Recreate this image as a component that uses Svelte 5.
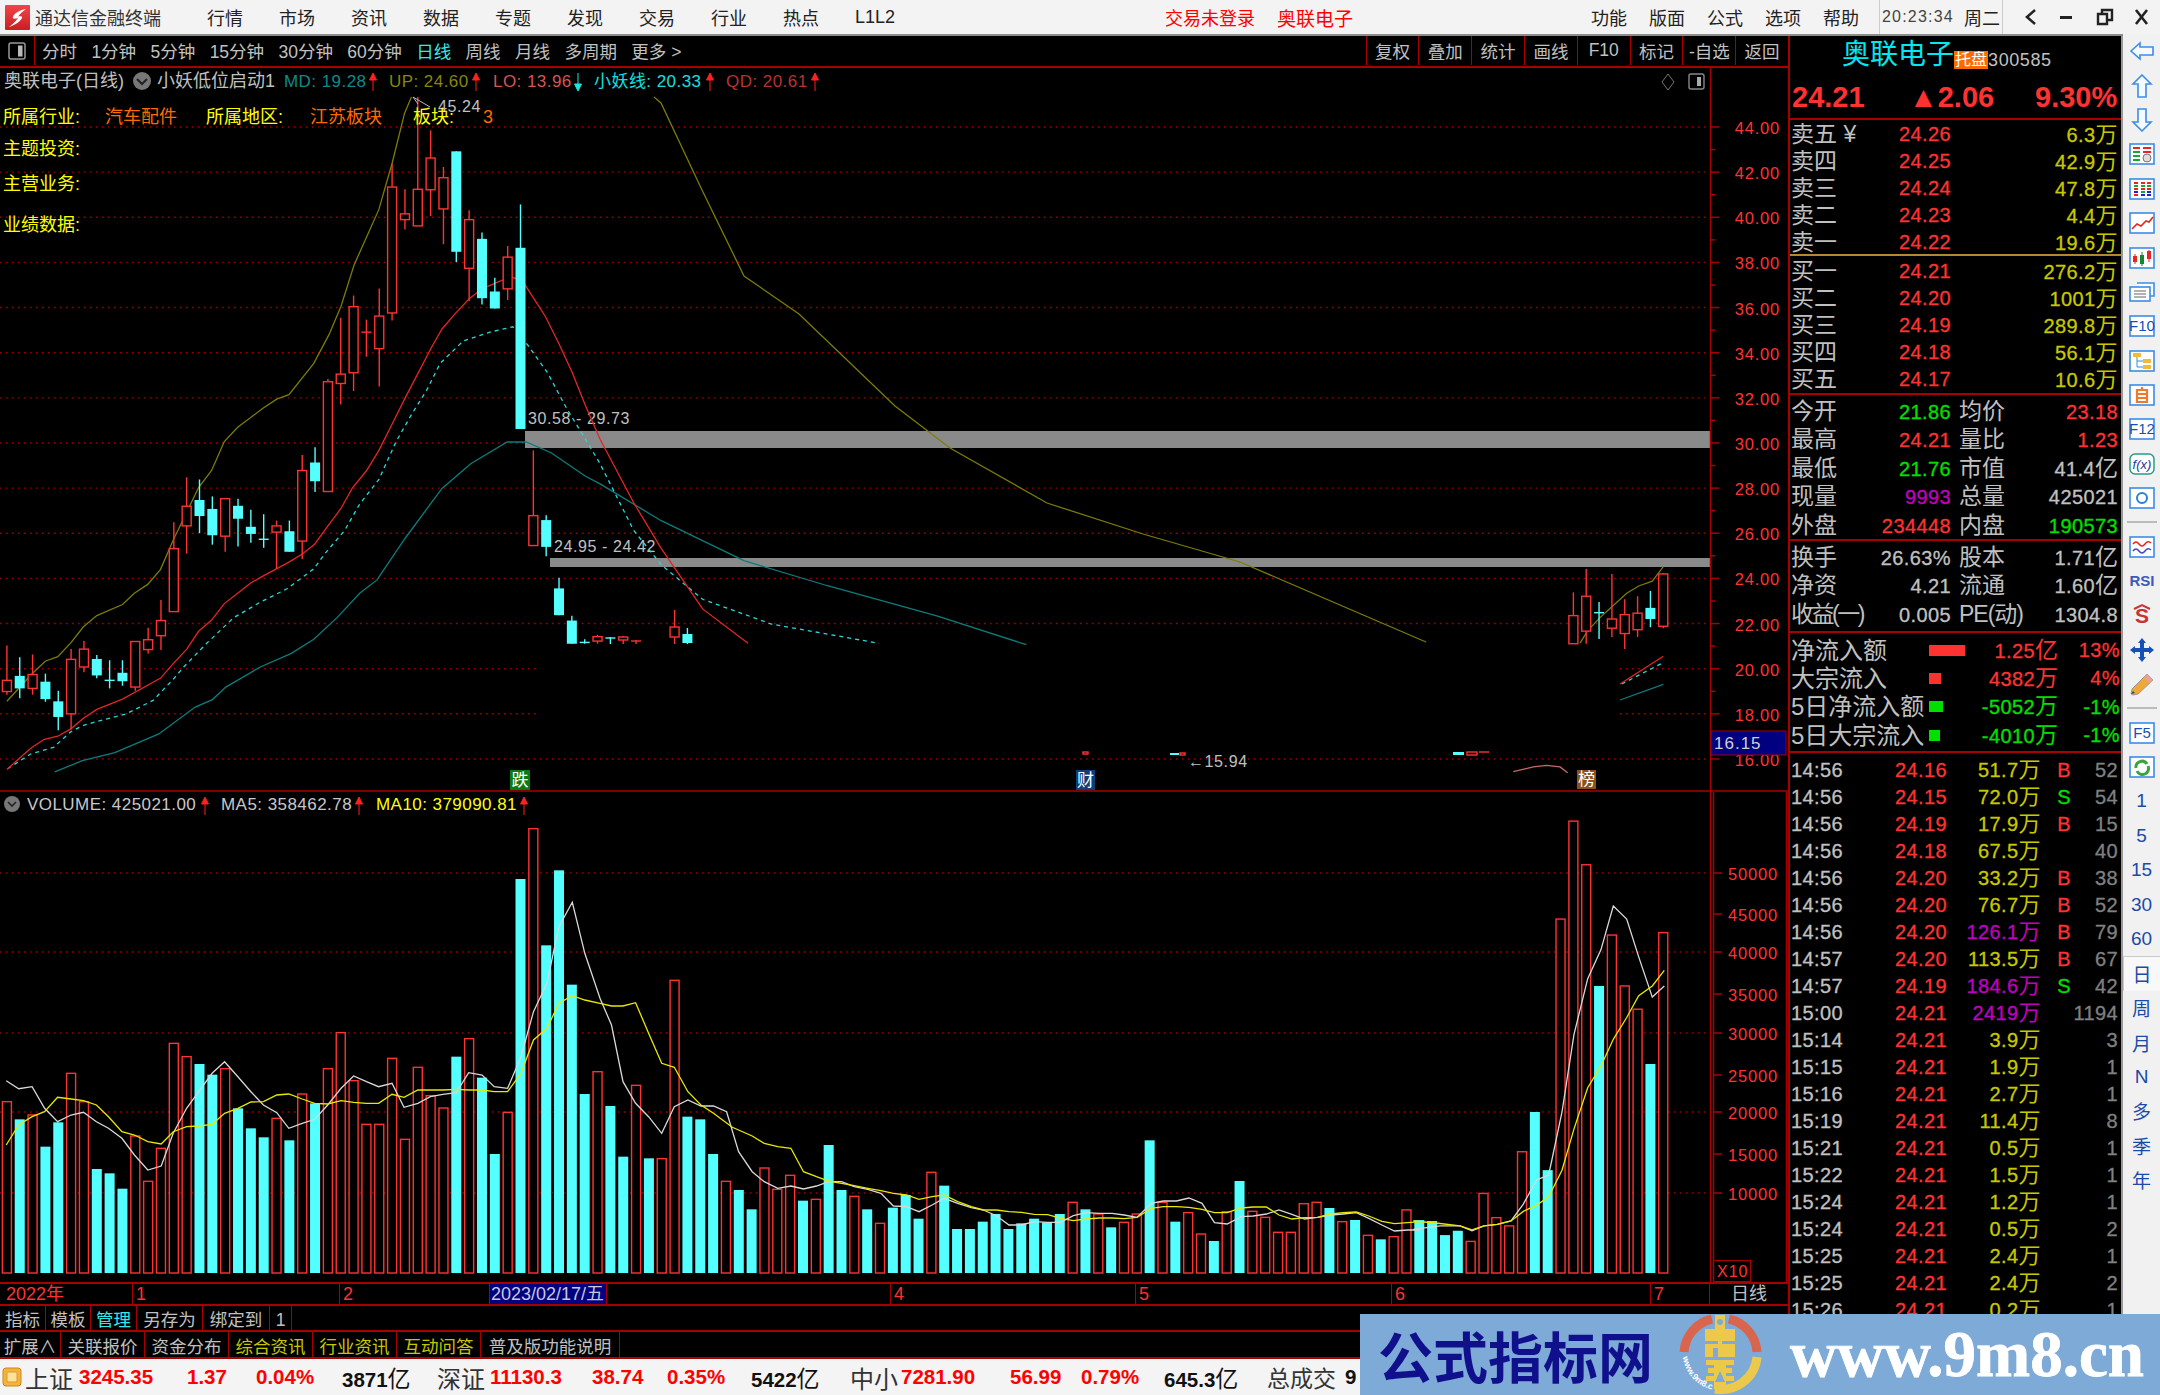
<script>
  const X = (i) => 6.9 + 12.84 * i;
  const y7 = (v) => 100 + v / 2.24;
  const y9 = (v) => 540 + v / 2.063;
  const y8 = (v) => 780 + v / 3;
  const z7 = ([x, y]) => [x / 2.613, y7(y)];
  const z8 = ([x, y]) => [x / 2.24, y8(y)];
  const z11 = ([x, y]) => [600 + x / 1.912, y8(y)];
  const z9 = ([x, y]) => [1400 + x / 3, y9(y)];
  const sh = ([x, y]) => [x * 1.3776, y * 1.3776];
  const pts = (a) => a.map((p) => p[0].toFixed(1) + ',' + p[1].toFixed(1)).join(' ');
  const pair = (a) => { const r = []; for (let i = 0; i < a.length; i += 2) r.push([a[i], a[i + 1]]); return r; };
  const num = (s) => s.replace(/[亿万]$/, '');
  const unit = (s) => (/[亿万]$/.test(s) ? s.slice(-1) : '');

  // r = rising (hollow red), c = falling (cyan): high, top, bottom, low
  const c7 = [
    ['r',1222,1300,1325,1332],['c',1248,1290,1318,1340],['r',1242,1287,1318,1332],['c',1285,1303,1342,1348],
    ['c',1323,1347,1382,1412],['r',1230,1253,1375,1410],['r',1212,1230,1270,1282],['c',1243,1252,1289,1295],
    ['c',1255,1300,1302,1318],['c',1255,1283,1302,1312],['r',1213,1213,1315,1323],['r',1182,1209,1231,1240],
    ['r',1120,1166,1200,1232],['r',946,1005,1146,1146],['r',845,910,954,1016],['c',850,896,932,970],
    ['c',888,916,975,996],['r',893,893,977,1012],['c',893,909,938,1000],['c',918,956,972,992],
    ['c',928,984,988,1003],['r',942,954,968,1050],['c',942,966,1012,1012],['r',795,830,988,1028],
    ['c',778,812,854,878],['r',625,631,877,877],['r',488,614,635,682],['r',438,463,611,652],
    ['r',492,520,522,575],['r',422,484,557,642],['r',142,195,477,494],['r',200,255,268,290],
    ['r',-7,200,282,282],['r',68,130,201,260],['r',150,174,244,323],['c',115,115,340,363],
    ['r',247,268,377,450],['c',297,311,444,458],['c',398,429,467,467],['r',327,352,423,448],
    ['c',234,331,737,737],['r',785,931,998,998],['c',930,941,1001,1022],['c',1070,1094,1154,1154],
    ['c',1155,1166,1218,1218],['c',1208,1215,1218,1218],['r',1198,1202,1212,1218],
  ].map((d, i) => ({ k: d[0], x: X(i), hi: y7(d[1]), top: y7(d[2]), bot: y7(d[3]), lo: y7(d[4]) }));
  const extra = [
    { k: 'c', x: X(47), hi: 637, top: 638, bot: 639, lo: 644 },
    { k: 'r', x: X(48), hi: 636, top: 637, bot: 640, lo: 644 },
    { k: 'r', x: X(49), hi: 640, top: 641, bot: 642, lo: 644 },
    { k: 'r', x: X(52), hi: 610, top: 627, bot: 637, lo: 644 },
    { k: 'c', x: X(53), hi: 628, top: 634, bot: 643, lo: 644 },
  ];
  const c9 = [
    ['r',108,156,214,214],['r',60,116,188,214],['c',128,150,153,204],['r',70,163,182,200],
    ['r',122,154,193,225],['r',116,151,185,200],['c',105,140,163,180],['r',68,70,178,182],
  ].map((d, i) => ({ k: d[0], x: X(122 + i), hi: y9(d[1]), top: y9(d[2]), bot: y9(d[3]), lo: y9(d[4]) }));
  const candles = [...c7, ...extra, ...c9];

  const olive = [
    pts(pair([18,1347,84,1285,118,1257,151,1247,186,1215,218,1180,253,1155,320,1130,351,1105,386,1085,419,1052,453,985,519,868,553,830,586,765,621,733,688,690,723,670,755,660,820,590,860,525,891,462,925,370,990,245,1025,140,1057,30,1075,-7]).map(z7)),
    pts(pair([654,97,661,103,702,190,744,276,799,314,895,406,950,448,1047,503,1143,534,1240,562,1426,642])),
    pts(pair([540,213,563,187,600,160,640,135,680,110,716,95,757,85,790,55]).map(z9)),
  ];
  const redLine = [
    pts([...pair([18,1500,50,1475,84,1450,116,1432,151,1425,186,1408,218,1385,253,1365,320,1342,420,1295,453,1262,488,1230,519,1190,553,1165,586,1128,621,1105,655,1082,688,1066,755,1035,790,1017,822,995,856,955,891,915,920,870,958,830,990,785,1025,725,1060,665,1127,555,1155,513,1190,478,1226,445,1260,423,1300,408,1335,396,1365,405,1395,445,1425,485,1460,545,1495,610,1530,685,1568,760]).map(z7), ...pair([460,365,480,398,510,442,543,467]).map(sh)]),
    pts(pair([660,297,790,240]).map(z9)),
  ];
  const dash = [
    pts([...pair([20,1498,80,1465,140,1450,185,1415,220,1400,285,1385,330,1375,400,1345,450,1300,480,1270,540,1217,610,1160,680,1125,750,1095,820,1050,850,1015,900,965,940,905,990,850,1035,765,1075,705,1115,650,1150,590,1210,540,1280,520,1340,508,1380,550,1430,610,1480,690,1530,760,1568,815]).map(z7), ...pair([460,385,480,410,510,435,560,453,638,467]).map(sh)]),
    pts(pair([665,297,790,253]).map(z9)),
  ];
  const teal = [
    pts([...pair([143,1505,215,1480,300,1462,415,1420,510,1360,555,1343,590,1315,680,1270,760,1240,820,1208,880,1160,940,1105,985,1075,1060,980,1155,870,1230,815,1325,766,1375,766,1440,790,1530,843,1568,860]).map(z7), ...pair([480,378,540,407,600,425,680,447,745,468]).map(sh)]),
    pts(pair([660,330,790,298]).map(z9)),
  ];
  const pink = pts(pair([340,478,400,468,440,465,480,468,503,480]).map(z9));

  const priceY = (p) => 127 + (44 - p) * 22.57;
  const priceGrid = [];
  for (let p = 44; p >= 16; p -= 2) priceGrid.push(p);
  const priceMinor = [];
  for (let p = 43; p >= 17; p -= 2) priceMinor.push(p);

  // top of each volume bar
  const v8 = 'r965 c1018 r1005 c1100 c1027 r880 r965 c1167 c1180 c1226 r1068 r1204 r1105 r790 r830 c852 c884 r866 c985 c1045 c1072 r1015 c1081 r942 c970 r866 r758 r902 r1033 r1033 r835 r1078 r862 r947 r984 c830 r776 c893 c1122 r997 c297 r146 c496 c271 c614 c942 r875'.split(' ').map((s) => ({ k: s[0], top: y8(+s.slice(1)) }));
  const v11 = 'c978 c1130 r916 c1135 r1136 r601 c1010 c1018 c1122 r1204 c1230 c1288 r1164 r1228 r1186 c1262 r1258 c1095 c1230 r1249 c1288 r1330 c1283 c1245 c1316 r1177 c1217 c1347 c1347 c1325 c1302 c1347 c1330 c1316 c1327 c1302 r1267 c1288 r1302 c1342 r1327 r1302 c1081 r1267 c1325 r1298 r1362 c1383 r1295 c1203 r1294 r1312 r1357 r1357 r1271 r1267 c1284 r1325 c1320 r1366 c1378 r1370'.split(' ').map((s) => ({ k: s[0], top: y8(+s.slice(1)) }));
  const v9 = 'r1382 c1403 c1405 c1434 c1425 r1447 r1348 r1398 r1415 r1262 c1180 c1300 r782 r580 r670 c920 r815 r920 r968 c1081 r810'.split(' ').map((s) => ({ k: s[0], top: y9(+s.slice(1)) }));
  const bars = [...v8, ...v11, ...v9].map((b, i) => ({ ...b, x: X(i) }));

  const ma5 = pts([
    ...pair([14,902,42,926,72,920,100,985,129,1025,159,1005,187,997,216,1025,243,1045,273,1075,301,1125,331,1170,361,1158,388,1060,418,985,445,935,475,880,503,845,533,890,562,935,590,975,620,998,647,1045,677,1030,705,1018,734,975,764,925,792,888,821,905,848,920,878,910,905,982,936,970,964,950,992,943,1022,938,1050,878,1080,885,1107,920,1137,925,1167,830,1195,695,1225,610,1252,440,1282,367,1310,520]).map(z8),
    ...pair([0,655,22,735,44,905,68,970,93,1010,118,1060,142,980,168,960,193,978,217,978,242,995,265,1115,291,1175,314,1205,340,1225,365,1218,389,1227,414,1218,437,1205,462,1205,486,1220,512,1228,537,1240,561,1278,586,1280,610,1295,635,1275,658,1255,684,1270,710,1283,733,1290,758,1307,782,1335,806,1335,830,1325,856,1327,881,1327,905,1307,930,1298,955,1300,979,1300,1002,1305,1027,1312,1054,1270,1077,1263,1102,1263,1126,1254,1151,1270,1175,1328,1199,1332,1226,1310,1249,1308,1274,1302,1298,1290,1323,1303,1347,1317,1372,1312,1397,1305,1421,1302,1446,1298,1470,1315,1495,1335,1519,1353,1544,1350,1568,1350]).map(z11),
    ...pair([40,1422,120,1415,180,1415,216,1425,252,1415,292,1412,333,1405,370,1370,410,1320,446,1310,486,1180,522,1020,563,905,603,845,640,755,680,782,716,860,757,943,793,920]).map(z9),
  ]);
  const ma10 = pts([
    ...pair([14,1095,42,1035,72,1010,100,995,129,952,159,957,187,962,216,975,243,1010,273,1055,301,1065,331,1085,361,1092,388,1055,418,1040,445,1038,475,1033,503,1000,533,985,562,966,590,965,620,945,647,942,677,957,705,970,734,972,764,962,792,967,821,970,848,970,878,943,905,952,936,930,964,930,992,930,1022,928,1050,930,1080,930,1107,935,1137,935,1167,880,1195,780,1225,745,1252,670,1282,647,1310,660]).map(z8),
    ...pair([0,670,22,678,44,678,68,668,93,760,118,850,142,862,168,935,193,975,217,1000,253,1042,291,1068,314,1090,340,1100,365,1105,389,1175,414,1190,437,1203,462,1210,486,1217,512,1225,537,1232,561,1240,586,1245,610,1258,635,1250,658,1245,684,1265,710,1280,733,1290,758,1290,782,1295,806,1297,830,1303,856,1304,881,1315,905,1322,930,1317,955,1314,979,1314,1002,1316,1027,1312,1054,1285,1077,1280,1102,1280,1126,1282,1151,1288,1175,1298,1199,1298,1226,1284,1249,1281,1274,1281,1298,1305,1323,1317,1347,1313,1372,1312,1397,1302,1421,1298,1446,1296,1470,1308,1495,1324,1519,1331,1544,1328,1568,1325]).map(z11),
    ...pair([40,1405,120,1410,180,1415,216,1423,252,1415,292,1412,333,1405,370,1385,410,1372,446,1355,486,1300,522,1215,563,1130,603,1085,640,1030,680,985,716,940,757,920,793,888]).map(z9),
  ]);

  const volGrid = [[50000, 873], [40000, 952], [30000, 1033], [20000, 1112], [10000, 1193]];
  const volTicks = [[50000, 873], [45000, 914], [40000, 952], [35000, 994], [30000, 1033], [25000, 1075], [20000, 1112], [15000, 1154], [10000, 1193]];

  const indicators = [
    { t: 'MD: 19.28', x: 284, a: 373, c: '#0a8c8c', up: true },
    { t: 'UP: 24.60', x: 389, a: 476, c: '#86860a', up: true },
    { t: 'LO: 13.96', x: 493, a: 578, c: '#d85454', up: false },
    { t: '小妖线: 20.33', x: 594, a: 710, c: '#10e0e0', up: true },
    { t: 'QD: 20.61', x: 726, a: 815, c: '#b83232', up: true },
  ];
  const volInfo = [
    { t: 'VOLUME: 425021.00', x: 27, a: 205, c: '#c8c8c8' },
    { t: 'MA5: 358462.78', x: 221, a: 359, c: '#c8c8c8' },
    { t: 'MA10: 379090.81', x: 376, a: 524, c: '#ffff00' },
  ];

  const menu = ['行情', '市场', '资讯', '数据', '专题', '发现', '交易', '行业', '热点', 'L1L2'];
  const sysMenu = ['功能', '版面', '公式', '选项', '帮助'];
  const periods = ['分时', '1分钟', '5分钟', '15分钟', '30分钟', '60分钟', '日线', '周线', '月线', '多周期', '更多 >'];
  const actions = ['复权', '叠加', '统计', '画线', 'F10', '标记', '-自选', '返回'];

  const asks = [['卖五 ¥', '24.26', '6.3'], ['卖四', '24.25', '42.9'], ['卖三', '24.24', '47.8'], ['卖二', '24.23', '4.4'], ['卖一', '24.22', '19.6']];
  const bids = [['买一', '24.21', '276.2'], ['买二', '24.20', '1001'], ['买三', '24.19', '289.8'], ['买四', '24.18', '56.1'], ['买五', '24.17', '10.6']];
  const stats = [
    ['今开', '21.86', 'g', '均价', '23.18', 'r'], ['最高', '24.21', 'r', '量比', '1.23', 'r'], ['最低', '21.76', 'g', '市值', '41.4亿', 'w'],
    ['现量', '9993', 'p', '总量', '425021', 'w'], ['外盘', '234448', 'r', '内盘', '190573', 'g'],
  ];
  const funda = [['换手', '26.63%', 'w', '股本', '1.71亿', 'w'], ['净资', '4.21', 'w', '流通', '1.60亿', 'w'], ['收益(一)', '0.005', 'w', 'PE(动)', '1304.8', 'w']];
  const flows = [
    ['净流入额', 36, 'r', '1.25亿', '13%'], ['大宗流入', 12, 'r', '4382万', '4%'],
    ['5日净流入额', 14, 'g', '-5052万', '-1%'], ['5日大宗流入', 11, 'g', '-4010万', '-1%'],
  ];
  const ticks = [
    ['14:56','24.16','51.7','','B','52'],['14:56','24.15','72.0','','S','54'],['14:56','24.19','17.9','','B','15'],['14:56','24.18','67.5','','','40'],
    ['14:56','24.20','33.2','','B','38'],['14:56','24.20','76.7','','B','52'],['14:56','24.20','126.1','p','B','79'],['14:57','24.20','113.5','','B','67'],
    ['14:57','24.19','184.6','p','S','42'],['15:00','24.21','2419','p','','1194'],['15:14','24.21','3.9','','','3'],['15:15','24.21','1.9','','','1'],
    ['15:16','24.21','2.7','','','1'],['15:19','24.21','11.4','','','8'],['15:21','24.21','0.5','','','1'],['15:22','24.21','1.5','','','1'],
    ['15:24','24.21','1.2','','','1'],['15:24','24.21','0.5','','','2'],['15:25','24.21','2.4','','','1'],['15:25','24.21','2.4','','','2'],['15:26','24.21','0.2','','','1'],
  ];
  const dates = [
    { t: '2022年', w: 133, c: 'r first' }, { t: '1', w: 207, c: 'r' }, { t: '2', w: 150, c: 'r' }, { t: '2023/02/17/五', w: 117, c: 'sel' },
    { t: '', w: 284, c: 'r' }, { t: '4', w: 245, c: 'r' }, { t: '5', w: 256, c: 'r' }, { t: '6', w: 259, c: 'r' }, { t: '7', w: 59, c: 'r' }, { t: '日线', w: 78, c: 'w' },
  ];
  const tabs1 = [['指标', 46, ''], ['模板', 45, ''], ['管理', 46, 'on'], ['另存为', 66, ''], ['绑定到', 67, ''], ['1', 22, '']];
  const tabs2 = [['扩展∧', 61, ''], ['关联报价', 84, ''], ['资金分布', 84, ''], ['综合资讯', 84, 'y'], ['行业资讯', 84, 'y'], ['互动问答', 84, 'y'], ['普及版功能说明', 139, '']];
  const status = [
    ['上证', 54, 'n'], ['3245.35', 108, 'v'], ['1.37', 69, 'v'], ['0.04%', 86, 'v'], ['3871亿', 95, 'b'],
    ['深证', 53, 'n'], ['11130.3', 102, 'v'], ['38.74', 75, 'v'], ['0.35%', 84, 'v'], ['5422亿', 99, 'b'],
    ['中小', 51, 'n'], ['7281.90', 109, 'v'], ['56.99', 71, 'v'], ['0.79%', 83, 'v'], ['645.3亿', 84, 'b'],
  ];
  const periodsSide = ['1', '5', '15', '30', '60', '日', '周', '月', 'N', '多', '季', '年'];
</script>

<div class="app">
  <header class="title">
    <svg class="logo" viewBox="0 0 25 25">
      <defs><linearGradient id="lg" x1="0" y1="0" x2="0" y2="1"><stop offset="0" stop-color="#f2454a" /><stop offset="1" stop-color="#c81e22" /></linearGradient></defs>
      <rect width="25" height="25" rx="1" fill="url(#lg)" />
      <path d="M21 4 C15 5 9 8 8 12 C7 14 10 14 13 13 C11 16 8 19 4 22 C10 20 15 17 17 13 C18 11 15 11 13 11.5 C15 9 18 6 21 4Z" fill="#fff" />
    </svg>
    <span class="brand">通达信金融终端</span>
    <nav class="menu">{#each menu as m}<span>{m}</span>{/each}</nav>
    <div class="alert"><span>交易未登录</span><span>奥联电子</span></div>
    <nav class="sys">{#each sysMenu as m}<span>{m}</span>{/each}</nav>
    <div class="clock"><span class="time">20:23:34</span><span>周二</span></div>
    <div class="win">
      <svg viewBox="0 0 144 26">
        <path d="M25 6 L17 13 L25 20" fill="none" stroke="#222" stroke-width="2.6" />
        <rect x="50" y="12" width="12" height="3" fill="#222" />
        <path d="M88 10h9v10h-9z M92 10v-4h10v10h-5" fill="none" stroke="#222" stroke-width="2.4" />
        <path d="M126 6 L137 20 M137 6 L126 20" stroke="#222" stroke-width="2.6" />
      </svg>
    </div>
  </header>

  <div class="main">
    <section class="chartcol">
      <div class="toolbar">
        <div class="left">
          <span class="boxcell"><svg viewBox="0 0 18 18" width="18" height="18"><rect x="1" y="1" width="16" height="16" rx="2" fill="none" stroke="#999" stroke-width="1.5" /><rect x="10" y="3.5" width="4.5" height="11" fill="#bbb" /></svg></span>
          <div class="periods">{#each periods as p}<span class:on={p === '日线'}>{p}</span>{/each}</div>
        </div>
        <div class="actions">{#each actions as a}<span>{a}</span>{/each}</div>
      </div>

      <svg class="chart" viewBox="0 68 1788 1214" width="1788" height="1214">
        <!-- price grid -->
        {#each priceGrid as p}
          {#if p === 20 || p === 18}
            <line class="grid" x1="0" x2="538" y1={priceY(p)} y2={priceY(p)} />
            <line class="grid" x1="1620" x2="1710" y1={priceY(p)} y2={priceY(p)} />
          {:else}
            <line class="grid" x1="0" x2="1710" y1={priceY(p)} y2={priceY(p)} />
          {/if}
          <line class="axis" x1="1710" x2="1719" y1={priceY(p)} y2={priceY(p)} />
          <text class="ax" x="1780" y={priceY(p) + 7}>{p}.00</text>
        {/each}
        {#each priceMinor as p}<line class="axis" x1="1710" x2="1715" y1={priceY(p)} y2={priceY(p)} />{/each}

        <rect class="band" x="525" y="431" width="1185" height="17" />
        <rect class="band" x="550" y="558" width="1160" height="9" />
        <text class="lbl" x="528" y="424">30.58 - 29.73</text>
        <text class="lbl" x="554" y="552">24.95 - 24.42</text>

        {#each olive as o}<polyline class="l" points={o} stroke="#7c7c08" />{/each}
        {#each teal as o}<polyline class="l" points={o} stroke="#0b7d7d" />{/each}
        {#each dash as o}<polyline class="l" points={o} stroke="#28d8d8" stroke-dasharray="4 4" />{/each}
        {#each redLine as o}<polyline class="l" points={o} stroke="#e52525" />{/each}
        <polyline class="l" points={pink} stroke="#c86a6a" />

        {#each candles as c}
          <line class={c.k === 'r' ? 'wr' : 'wc'} x1={c.x} x2={c.x} y1={c.hi} y2={c.lo} />
          {#if c.bot - c.top < 3}
            <line class={c.k === 'r' ? 'wr' : 'wc'} x1={c.x - 5} x2={c.x + 5} y1={c.top} y2={c.top} />
          {:else if c.k === 'r'}
            <rect class="hollow" x={c.x - 4.5} y={c.top} width="9" height={c.bot - c.top} />
          {:else}
            <rect class="solid" x={c.x - 5} y={c.top} width="10" height={c.bot - c.top} />
          {/if}
        {/each}

        <rect class="solid" x="1453" y="752" width="11" height="3" />
        <rect class="hollow" x="1467" y="752" width="10" height="3" />
        <line class="wr" x1="1479" x2="1489" y1="752" y2="752" />
        <rect class="solid" x="1170" y="753" width="9" height="2" />
        <rect class="hollow" x="1180" y="753" width="5" height="2" />
        <rect class="hollow" x="1083" y="752" width="5" height="2" />
        <text class="lbl" x="1188" y="767">←15.94</text>
        <path d="M413 97 L430 107 M413 97 L418 104" fill="none" stroke="#bbb" />
        <text class="lbl" x="438" y="112">45.24</text>

        <!-- info text over the price pane -->
        <text class="info y" x="3" y="123">所属行业:</text>
        <text class="info o" x="105" y="123">汽车配件</text>
        <text class="info y" x="206" y="123">所属地区:</text>
        <text class="info o" x="310" y="123">江苏板块</text>
        <text class="info y" x="413" y="123">板块:</text>
        <text class="info o" x="483" y="123">3</text>
        <text class="info y" x="3" y="155">主题投资:</text>
        <text class="info y" x="3" y="190">主营业务:</text>
        <text class="info y" x="3" y="231">业绩数据:</text>

        <text class="cjk gr" x="4" y="87">奥联电子(日线)</text>
        <circle cx="142" cy="81" r="9" fill="#777" />
        <path d="M137 79 L142 84 L147 79" fill="none" stroke="#222" stroke-width="2" />
        <text class="cjk gr" x="157" y="87">小妖低位启动1</text>
        {#each indicators as n}
          <text class="top" x={n.x} y="87" fill={n.c}>{n.t}</text>
          {#if n.up}
            <path d="M{n.a} 91 V74 M{n.a - 3.5} 80 L{n.a} 73 L{n.a + 3.5} 80Z" stroke="#ff2020" fill="#ff2020" />
          {:else}
            <path d="M{n.a} 73 V89 M{n.a - 3.5} 84 L{n.a} 91 L{n.a + 3.5} 84Z" stroke="#20e0e0" fill="#20e0e0" />
          {/if}
        {/each}
        <path d="M1668 74 L1674 82 L1668 90 L1662 82Z" fill="none" stroke="#777" />
        <rect x="1689" y="74" width="15" height="15" rx="2" fill="none" stroke="#888" stroke-width="1.4" />
        <rect x="1697" y="77" width="4" height="9" fill="#aaa" />

        <rect class="badge" x="510" y="770" width="20" height="20" fill="#087c10" />
        <text class="bt" x="520" y="786">跌</text>
        <rect class="badge" x="1076" y="770" width="19" height="20" fill="#0c3f78" />
        <text class="bt" x="1085.500" y="786">财</text>
        <rect class="badge" x="1577" y="770" width="19" height="19" fill="#8a5216" />
        <text class="bt" x="1586.500" y="785">榜</text>

        <!-- axes -->
        <line class="frame" x1="0" x2="1788" y1="791" y2="791" />
        <line class="frame" x1="1710.500" x2="1710.500" y1="68" y2="1282" />
        <line class="frame" x1="1713.500" x2="1713.500" y1="792" y2="1282" />
        <line class="frame" x1="1786.500" x2="1786.500" y1="792" y2="1282" />
        <rect x="1711" y="731" width="75" height="24" fill="#000080" />
        <rect x="1711" y="731" width="75" height="24" fill="none" stroke="#a80000" />
        <text class="hl" x="1714" y="749">16.15</text>

        <!-- volume -->
        {#each volGrid as g}<line class="grid" x1="0" x2="1710" y1={g[1]} y2={g[1]} />{/each}
        {#each volTicks as g}
          <line class="axis" x1="1713" x2="1722" y1={g[1]} y2={g[1]} />
          <text class="ax" x="1778" y={g[1] + 7}>{g[0]}</text>
        {/each}
        {#each bars as b}
          {#if b.k === 'r'}
            <rect class="hollow" x={b.x - 4.5} y={b.top} width="9" height={1273 - b.top} />
          {:else}
            <rect class="solid" x={b.x - 5} y={b.top} width="10" height={1273 - b.top} />
          {/if}
        {/each}
        <polyline class="l" points={ma5} stroke="#d8d8d8" />
        <polyline class="l" points={ma10} stroke="#e8e800" />
        <circle cx="12" cy="804" r="8" fill="#777" />
        <path d="M8 802 L12 806 L16 802" fill="none" stroke="#222" stroke-width="1.6" />
        {#each volInfo as n}
          <text class="top" x={n.x} y="810" fill={n.c}>{n.t}</text>
          <path d="M{n.a} 815 V798 M{n.a - 3.5} 804 L{n.a} 797 L{n.a + 3.5} 804Z" stroke="#ff2020" fill="#ff2020" />
        {/each}
        <rect x="1713.500" y="1260.500" width="37" height="21" fill="none" stroke="#a80000" />
        <text class="x10" x="1717" y="1277">X10</text>
      </svg>

      <div class="daterow">
        {#each dates as d}<span class={d.c} style="width:{d.w}px">{d.t}</span>{/each}
      </div>
      <div class="tabrow">{#each tabs1 as t}<span class={t[2]} style="width:{t[1]}px">{t[0]}</span>{/each}</div>
      <div class="tabrow">{#each tabs2 as t}<span class={t[2]} style="width:{t[1]}px">{t[0]}</span>{/each}</div>
    </section>

    <aside class="quote">
      <div class="head"><span class="name">奥联电子</span><span class="tag">托盘</span><span class="code">300585</span></div>
      <div class="bigrow"><span>24.21</span><span>▲2.06</span><span>9.30%</span></div>
      <div class="book asks">
        {#each asks as a}<div class="lv"><span class="lab">{a[0]}</span><span class="px">{a[1]}</span><span class="amt">{a[2]}<i>万</i></span></div>{/each}
      </div>
      <div class="book bids">
        {#each bids as a}<div class="lv"><span class="lab">{a[0]}</span><span class="px">{a[1]}</span><span class="amt">{a[2]}<i>万</i></span></div>{/each}
      </div>
      <div class="stats five">
        {#each stats as s}<div class="st"><span class="lab">{s[0]}</span><span class={s[2]}>{num(s[1])}<i class="u">{unit(s[1])}</i></span><span class="lab">{s[3]}</span><span class={s[5]}>{num(s[4])}<i class="u">{unit(s[4])}</i></span></div>{/each}
      </div>
      <div class="stats three">
        {#each funda as s}<div class="st"><span class="lab">{s[0]}</span><span class={s[2]}>{num(s[1])}<i class="u">{unit(s[1])}</i></span><span class="lab">{s[3]}</span><span class={s[5]}>{num(s[4])}<i class="u">{unit(s[4])}</i></span></div>{/each}
      </div>
      <div class="flows">
        {#each flows as f}
          <div class="fl"><span class="lab">{f[0]}</span><span class="barcell"><b class={f[2]} style="width:{f[1]}px"></b></span><span class={f[2]}>{num(f[3])}<i class="u">{unit(f[3])}</i></span><span class={f[2]}>{f[4]}</span></div>
        {/each}
      </div>
      <div class="ticks">
        {#each ticks as t}
          <div class="tk"><span class="tm">{t[0]}</span><span class="r">{t[1]}</span><span class={t[3] === 'p' ? 'amtp' : 'amty'}>{t[2]}<i>万</i></span><span class={t[4] === 'S' ? 'g' : 'r'}>{t[4]}</span><span class="cnt">{t[5]}</span></div>
        {/each}
      </div>
    </aside>

    <aside class="tools">
      <span><svg viewBox="0 0 28 24"><path d="M3 12 L12 4 V8 H25 V16 H12 V20Z" class="ar" /></svg></span>
      <span><svg viewBox="0 0 28 24"><path d="M14 1 L23 10 H18 V23 H10 V10 H5Z" class="ar" /></svg></span>
      <span><svg viewBox="0 0 28 24"><path d="M14 23 L23 14 H18 V1 H10 V14 H5Z" class="ar" /></svg></span>
      <span><svg viewBox="0 0 28 24"><rect class="fr" x="2" y="2" width="24" height="20" /><path d="M5 6h7M15 6h8M15 10h8" stroke="#e22" stroke-width="2" /><path d="M5 10h7M5 14h7M5 18h7" stroke="#1a3" stroke-width="2" /><circle cx="19" cy="16" r="4" fill="#ddd" stroke="#777" /></svg></span>
      <span><svg viewBox="0 0 28 24"><rect class="fr" x="2" y="2" width="24" height="20" /><path d="M6 6h4M13 6h4M19 6h4M6 12h4M13 12h4M19 12h4M6 18h4" stroke="#e22" stroke-width="2" /><path d="M6 9h4M13 9h4M19 9h4M13 15h4" stroke="#1a3" stroke-width="2" /><path d="M6 15h4M19 15h4M13 18h4M19 18h4" stroke="#22c" stroke-width="2" /></svg></span>
      <span><svg viewBox="0 0 28 24"><rect class="fr" x="2" y="2" width="24" height="20" /><path d="M4 18 L9 13 L13 15 L18 10 L21 11 L25 6" fill="none" stroke="#e22" stroke-width="1.6" /></svg></span>
      <span><svg viewBox="0 0 28 24"><rect class="fr" x="2" y="2" width="24" height="20" /><path d="M7 8v10M21 4v12" stroke="#e22" /><rect x="5" y="10" width="4" height="6" fill="#e22" /><rect x="12" y="9" width="4" height="9" fill="#183" /><path d="M14 6v14" stroke="#183" /><rect x="19" y="5" width="4" height="8" fill="#e22" /></svg></span>
      <span><svg viewBox="0 0 28 24"><path class="fr" d="M9 3h17v13h-4" /><rect class="fr" x="2" y="7" width="20" height="14" /><path d="M6 11h12M6 14h12M6 17h12" stroke="#999" stroke-width="1.4" /></svg></span>
      <span><svg viewBox="0 0 28 24"><rect class="fr" x="2" y="2" width="24" height="20" /><text class="fk" x="14" y="17">F10</text></svg></span>
      <span><svg viewBox="0 0 28 24"><rect class="fr" x="2" y="2" width="24" height="20" /><path d="M9 8v10h6M9 12h6" fill="none" stroke="#3b8de6" /><rect x="5" y="4" width="8" height="4" fill="#f5b93a" /><rect x="15" y="10" width="8" height="4" fill="#f5b93a" /><rect x="15" y="16" width="8" height="4" fill="#f5b93a" /></svg></span>
      <span><svg viewBox="0 0 28 24"><rect class="fr" x="2" y="2" width="24" height="20" /><path d="M9 7h10v12H9z M9 11h10 M9 15h10 M14 4v3" fill="none" stroke="#f07a2a" stroke-width="2.2" /></svg></span>
      <span><svg viewBox="0 0 28 24"><rect class="fr" x="2" y="2" width="24" height="20" /><text class="fk" x="14" y="17">F12</text></svg></span>
      <span><svg viewBox="0 0 28 24"><rect x="2" y="2" width="24" height="20" rx="5" fill="#fff" stroke="#2a9a8a" stroke-width="1.5" /><text class="fx" x="14" y="17">f(x)</text></svg></span>
      <span><svg viewBox="0 0 28 24"><rect class="fr" x="2" y="2" width="24" height="20" /><circle cx="14" cy="12" r="5" fill="none" stroke="#2a7fd8" stroke-width="2" /></svg></span>
      <em class="sep"></em>
      <span><svg viewBox="0 0 28 24"><rect class="fr" x="2" y="2" width="24" height="20" /><path d="M5 9 Q8 5 11 9 T17 9 T23 8" fill="none" stroke="#e22" stroke-width="1.5" /><path d="M5 16 Q8 12 11 16 T17 16 T23 15" fill="none" stroke="#44c" stroke-width="1.5" /></svg></span>
      <span><svg viewBox="0 0 28 24"><text class="rsi" x="14" y="17">RSI</text></svg></span>
      <span><svg viewBox="0 0 28 24"><text class="dollar" x="14" y="20">S</text><path d="M6 6 L14 2 L22 6" fill="none" stroke="#c33" stroke-width="2" /></svg></span>
      <span><svg viewBox="0 0 28 24"><path d="M14 0 L18 5 H16 V10 H21 V8 L26 12 L21 16 V14 H16 V19 H18 L14 24 L10 19 H12 V14 H7 V16 L2 12 L7 8 V10 H12 V5 H10Z" fill="#1450b8" /></svg></span>
      <span><svg viewBox="0 0 28 24"><path d="M5 23 L3 22 L4 17 L19 2 L25 8 L10 22Z" fill="#eea93a" stroke="#999" /><path d="M19 2 L25 8 L22 11 L16 5Z" fill="#e8a0a0" /><path d="M3 22 L5 19 L7 21Z" fill="#444" /></svg></span>
      <em class="sep"></em>
      <span><svg viewBox="0 0 28 24"><rect class="fr" x="2" y="2" width="24" height="20" /><text class="fk" x="14" y="17">F5</text></svg></span>
      <span><svg viewBox="0 0 28 24"><rect class="fr" x="2" y="2" width="24" height="20" /><path d="M8 13 A6 6 0 0 1 19 9 M20 11 A6 6 0 0 1 9 16" fill="none" stroke="#3aa53a" stroke-width="3" /></svg></span>
      {#each periodsSide as p}<span class="per" class:sel={p === '日'}>{p}</span>{/each}
    </aside>
  </div>

  <footer class="status">
    <svg class="sico" viewBox="0 0 20 20"><rect x="1" y="1" width="18" height="18" rx="3" fill="#f6b23a" stroke="#c88a20" /><rect x="5" y="5" width="10" height="10" rx="1" fill="#fde29a" stroke="#d89a30" /></svg>
    {#each status as s}
      {#if s[2] === 'b'}
        <span class="b" style="width:{s[1]}px">{s[0].slice(0, -1)}<i>亿</i></span>
      {:else}
        <span class={s[2]} style="width:{s[1]}px">{s[0]}</span>
      {/if}
    {/each}
    <span class="n total">总成交</span><span class="b">9</span>
  </footer>

  <div class="banner">
    <span class="cn">公式指标网</span>
    <svg class="seal" viewBox="0 4 100 81">
      <defs><path id="sealarc" d="M13 47 A38 38 0 0 0 44 80" fill="none" /></defs>
      <path d="M14 42 A36 36 0 0 1 42 9" fill="none" stroke="#d9654e" stroke-width="9" />
      <path d="M59 9 A36 36 0 0 1 87 42" fill="none" stroke="#d9654e" stroke-width="9" />
      <path d="M87 47 A36 36 0 0 1 45 79" fill="none" stroke="#ecc94b" stroke-width="9" />
      <text class="sealt"><textPath href="#sealarc">www.9m8.cn</textPath></text>
      <path d="M45 5h10v14h10v28H35V19h10z" fill="#ecc94b" />
      <circle cx="50" cy="12" r="3" fill="#7eaad8" />
      <path d="M35 31h13v3H35z M52 31h13v3H52z M43 38h5v9h-5z" fill="#7eaad8" />
      <path d="M36 50h28v5H36z M38 58h24v5H38z M36 66h28v5H36z M44 50h12v22H44z M44 72h12v7H44z" fill="#ecc94b" />
      <path d="M50 61 L45 72 H55Z" fill="#7eaad8" />
    </svg>
    <span class="url">www.9m8.cn</span>
  </div>
</div>

<style>
  :global(body) { margin: 0; background: #000; }
  .app {
    position: relative; width: 2160px; height: 1395px; overflow: hidden; display: flex; flex-direction: column;
    background: #000; font-family: "Liberation Sans", "Noto Sans CJK SC", sans-serif;
  }
  .app i { font-style: normal; }

  .title { height: 34px; border-bottom: 2px solid #8c8c8c; background: #f3f3f3; display: flex; align-items: center; color: #222; font-size: 18px; flex: none; }
  .logo { width: 25px; height: 25px; margin-left: 5px; }
  .brand { margin-left: 5px; color: #333; }
  .menu { display: flex; align-items: center; gap: 36px; margin-left: 46px; }
  .alert { display: flex; align-items: center; gap: 22px; margin-left: 270px; color: #f00; }
  .alert span:last-child { font-size: 19px; }
  .sys { display: flex; gap: 22px; margin-left: auto; }
  .clock { display: flex; gap: 10px; width: 124px; height: 34px; align-items: center; margin-left: 20px; padding-left: 2px; box-sizing: border-box; border-left: 1px solid #ccc; border-right: 1px solid #ccc; }
  .time { font-size: 16px; letter-spacing: 1.2px; color: #444; }
  .win { width: 157px; flex: none; display: flex; justify-content: flex-end; }
  .win svg { width: 144px; height: 26px; margin-right: 6px; }

  .main { flex: 1; min-height: 0; display: flex; }
  .chartcol { width: 1788px; flex: none; display: flex; flex-direction: column; }
  .toolbar { height: 32px; flex: none; box-sizing: border-box; border-bottom: 2px solid #a80000; display: flex; justify-content: space-between; color: #c0c0c0; font-size: 17.5px; padding-bottom: 1px; }
  .left { display: flex; align-items: stretch; }
  .boxcell { width: 35px; display: flex; align-items: center; justify-content: center; border-right: 1px solid #a80000; box-sizing: border-box; }
  .periods { display: flex; align-items: center; gap: 14.4px; padding-left: 7px; white-space: nowrap; }
  .periods .on { color: #33eaea; }
  .actions { display: flex; }
  .actions span { width: 52.8px; box-sizing: border-box; border-left: 1px solid #a80000; display: flex; align-items: center; justify-content: center; }

  .chart { display: block; flex: none; overflow: hidden; background: #000; }
  .grid { stroke: #a00000; stroke-width: 1.4; stroke-dasharray: 1.4 4.6; }
  .axis, .frame { stroke: #a80000; stroke-width: 1.5; }
  .ax { fill: #ff3232; font-size: 16.5px; letter-spacing: 0.8px; text-anchor: end; -webkit-text-stroke: 0.25px #ff3232; }
  .band { fill: #8a8a8a; }
  .lbl { fill: #c0c0c0; font-size: 16px; letter-spacing: .6px; }
  .l { fill: none; stroke-width: 1.3; }
  .wr { stroke: #ff3232; stroke-width: 1.4; }
  .wc { stroke: #54ffff; stroke-width: 1.4; }
  .hollow { fill: #000; stroke: #ff3232; stroke-width: 1.4; }
  .solid { fill: #54ffff; }
  .info { font-size: 18px; }
  .y { fill: #ffff00; }
  .o { fill: #ff6a00; }
  .top { font-size: 17px; letter-spacing: .45px; }
  .cjk { font-size: 18px; }
  .gr { fill: #c0c0c0; }
  .bt { fill: #fff; font-size: 17px; text-anchor: middle; }
  .hl { fill: #d0d0d0; font-size: 17px; letter-spacing: 1px; }
  .x10 { fill: #ff3232; font-size: 16px; letter-spacing: 1px; }

  .daterow, .tabrow { display: flex; flex: none; box-sizing: border-box; border-bottom: 2px solid #a80000; color: #c0c0c0; white-space: nowrap; }
  .daterow { height: 24px; border-top: 2px solid #a80000; font-size: 18px; line-height: 20px; margin-bottom: -1px; }
  .daterow span { box-sizing: border-box; padding-left: 3px; border-right: 1px solid #a80000; }
  .daterow .first { padding-left: 6px; }
  .daterow .r { color: #ff3232; }
  .daterow .sel { background: #000080; color: #c8c8d8; padding-left: 1px; }
  .daterow .w { text-align: center; padding-left: 0; border-right: 0; }
  .tabrow { height: 27px; font-size: 17.5px; line-height: 30px; }
  .tabrow span { box-sizing: border-box; text-align: center; border-right: 1px solid #a80000; }
  .tabrow .on { color: #33eaea; }
  .tabrow .y { color: #c8c800; }

  .quote { width: 335px; flex: none; box-sizing: border-box; border-left: 2px solid #a80000; border-right: 2px solid #999; overflow: hidden; color: #c0c0c0; }
  .head { height: 40px; display: flex; align-items: flex-end; padding-left: 52px; box-sizing: border-box; padding-bottom: 6px; }
  .name { font-size: 28px; line-height: 30px; color: #00e8f0; }
  .tag { width: 34px; height: 18px; background: #ff6a00; color: #fff; font-size: 16px; line-height: 18px; text-align: center; margin-bottom: 1px; }
  .code { font-size: 18px; line-height: 20px; letter-spacing: .6px; }
  .bigrow { height: 44px; box-sizing: border-box; border-bottom: 2px solid #a80000; display: grid; grid-template-columns: 117px 126px 1fr; padding-left: 2px; align-items: center; color: #ff3232; font-size: 29px; font-weight: 700; }
  .book { box-sizing: border-box; }
  .asks { height: 136px; border-bottom: 2px solid #b08a30; padding-top: 1px; }
  .bids { height: 139px; border-bottom: 2px solid #a80000; padding-top: 2px; }
  .lv { display: grid; grid-template-columns: 100px 60px 167px; padding-left: 1px; height: 27px; align-items: center; }
  .lab { font-size: 23px; line-height: 27px; white-space: nowrap; }
  .px { color: #ff3232; font-size: 20px; text-align: right; letter-spacing: .4px; -webkit-text-stroke: 0.3px #ff3232; }
  .amt { color: #c8c800; font-size: 20px; line-height: 22px; text-align: right; letter-spacing: .4px; white-space: nowrap; -webkit-text-stroke: 0.3px #c8c800; }
  .amt i, .amty i, .amtp i { font-size: 22px; -webkit-text-stroke: 0; }
  .stats { box-sizing: border-box; border-bottom: 2px solid #a80000; padding-top: 2px; }
  .five { height: 146px; }
  .three { height: 92px; }
  .st { display: grid; grid-template-columns: 50px 110px 58px 109px; padding-left: 1px; height: 28.500px; align-items: center; font-size: 20px; line-height: 24px; letter-spacing: .4px; white-space: nowrap; -webkit-text-stroke: 0.3px currentColor; }
  .st > span:nth-child(even) { text-align: right; }
  .st .lab { letter-spacing: 0; -webkit-text-stroke: 0; }
  .st .lab:nth-child(3) { padding-left: 8px; }
  .three .st:last-child .lab:first-child { letter-spacing: -2.5px; }
  .three .st:last-child .lab:nth-child(3) { letter-spacing: -1px; }
  .u { font-size: 23px; -webkit-text-stroke: 0; letter-spacing: 0; }
  .st > .r, .fl > .r, .tk > .r { color: #ff3232; }
  .st > .g, .fl > .g, .tk > .g { color: #00e000; }
  .st > .p { color: #c000c0; }
  .st > .w { color: #c0c0c0; }
  .flows { height: 120px; box-sizing: border-box; border-bottom: 2px solid #a80000; padding-top: 3px; }
  .fl { display: grid; grid-template-columns: 138px 50px 79px 62px; padding-left: 1px; height: 28.300px; align-items: center; font-size: 20px; line-height: 24px; letter-spacing: .4px; white-space: nowrap; -webkit-text-stroke: 0.3px currentColor; }
  .fl .lab { font-size: 24px; letter-spacing: 0; -webkit-text-stroke: 0; }
  .fl > span:nth-child(n+3) { text-align: right; }
  .barcell { display: flex; align-items: center; }
  .barcell b { display: block; height: 11px; }
  .barcell b.r { background: #ff3232; }
  .barcell b.g { background: #00e000; }
  .ticks { padding-top: 3px; }
  .tk { display: grid; grid-template-columns: 60px 96px 94px 32px 45px; padding-left: 1px; height: 27px; align-items: center; font-size: 20px; line-height: 24px; letter-spacing: .4px; white-space: nowrap; -webkit-text-stroke: 0.3px currentColor; }
  .tk span:nth-child(2), .tk span:nth-child(3), .tk span:nth-child(5) { text-align: right; }
  .tk span:nth-child(4) { text-align: right; padding-right: 2px; }
  .tm { color: #c0c0c0; }
  .amty { color: #c8c800; }
  .amtp { color: #c000c0; }
  .cnt { color: #808080; }

  .tools { flex: 1; background: #f1f1f1; display: flex; flex-direction: column; align-items: center; margin-top: -2px; overflow: hidden; }
  .tools span { height: 34.400px; width: 100%; flex: none; display: flex; align-items: center; justify-content: center; }
  .tools svg { width: 28px; height: 24px; }
  .sep { display: block; width: 30px; height: 2px; background: #bbb; margin: 6px 0 6px; flex: none; }
  .ar { fill: #f4faff; stroke: #3b8de6; stroke-width: 1.6; }
  .fr { fill: #fff; stroke: #3b8de6; stroke-width: 1.6; }
  .fk { font-size: 15px; fill: #1450b8; text-anchor: middle; }
  .fx { font-size: 13px; fill: #1a3a98; font-style: italic; text-anchor: middle; }
  .rsi { font-size: 15px; font-weight: 700; fill: #3c5ab8; text-anchor: middle; }
  .dollar { font-size: 21px; font-weight: 700; fill: #c83232; text-anchor: middle; }
  .per { color: #1b4aa8; font-size: 19px; box-sizing: border-box; }
  .per.sel { background: #f8f8f8; border: 1px solid #ccc; border-bottom: 0; border-right: 0; }

  .status { height: 36px; flex: none; background: #f4f4f4; display: flex; align-items: center; white-space: nowrap; color: #222; }
  .sico { width: 20px; height: 20px; margin: 0 3px 0 2px; flex: none; }
  .status .n { font-size: 24px; color: #333; }
  .status .v { font-size: 20.5px; font-weight: 700; color: #f00; box-sizing: border-box; }
  .status .b { font-size: 20.5px; font-weight: 700; color: #111; }
  .status .b i { font-size: 23px; font-weight: 400; }
  .total { margin-left: 19px; width: 78px; font-size: 23px !important; }

  .banner { position: absolute; left: 1360px; top: 1314px; width: 800px; height: 81px; background: #7eaad8; display: flex; align-items: center; }
  .cn { font-size: 55px; line-height: 81px; font-weight: 700; color: #10108c; margin-left: 18px; white-space: nowrap; font-family: "Noto Sans CJK SC", sans-serif; }
  .seal { width: 100px; height: 81px; margin-left: 17px; flex: none; }
  .sealt { font-size: 8.500px; font-weight: 700; fill: #fff; }
  .url { font-family: "Liberation Serif", serif; font-weight: 700; font-size: 65px; color: #fff; margin-left: 20px; white-space: nowrap; line-height: 81px; -webkit-text-stroke: 0.8px #fff; }
</style>
